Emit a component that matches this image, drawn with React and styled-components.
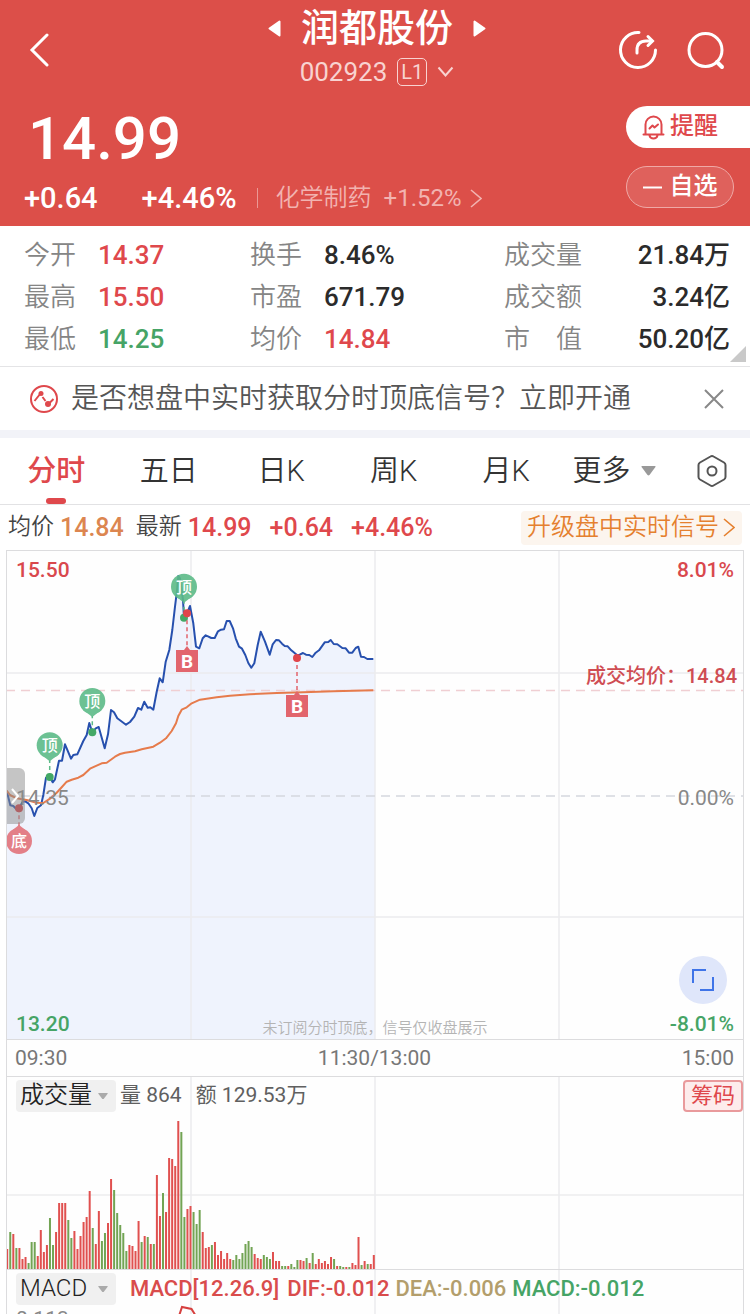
import React, { useState } from "react";
import styled, { createGlobalStyle } from "styled-components";

const GlobalStyle = createGlobalStyle`
  * {
    box-sizing: border-box;
  }
  body {
    margin: 0;
    background: #fff;
    color: #333;
    font-family: Roboto, "Noto Sans CJK SC", sans-serif;
    font-weight: 350;
    line-height: 1.4;
  }
  button {
    padding: 0;
    border: 0;
    background: none;
    color: inherit;
    font: inherit;
    cursor: pointer;
  }
  a {
    color: inherit;
    text-decoration: none;
  }
  svg {
    display: block;
    flex: none;
  }
`;

const RED = "#df484c";
const GREEN = "#46a466";
const ORANGE = "#dc8650";

const Page = styled.div`
  height: 100vh;
  overflow: hidden;
`;

/* ---------- header ---------- */

const Header = styled.header`
  background: #dc4f49;
  color: #fff;
  height: 226px;
`;

const TopBar = styled.div`
  display: grid;
  grid-template-columns: 1fr auto 1fr;
  align-items: center;
  height: 100px;
  padding: 0 24px 0 28px;
`;

const Back = styled.button`
  justify-self: start;
`;

const Stock = styled.div`
  display: flex;
  flex-direction: column;
  align-items: center;
`;

const StockName = styled.div`
  display: flex;
  align-items: center;
  gap: 20px;
  height: 44px;

  h1 {
    margin: 0;
    font-size: 38px;
    line-height: 44px;
    font-weight: 500;
  }
`;

const StockCode = styled.button`
  display: flex;
  align-items: center;
  gap: 10px;
  height: 44px;
  font-size: 26px;
  font-weight: 400;
  color: #f8d3d1;
`;

const Level = styled.span`
  width: 30px;
  height: 28px;
  border: 1px solid #f8d3d1;
  border-radius: 5px;
  font-size: 20px;
  line-height: 26px;
  text-align: center;
`;

const TopIcons = styled.div`
  display: flex;
  justify-content: flex-end;
  gap: 28px;
`;

const Quote = styled.div`
  display: flex;
  justify-content: space-between;
`;

const Price = styled.div`
  padding-left: 28px;
  font-size: 60px;
  line-height: 78px;
  font-weight: 500;
`;

const Changes = styled.div`
  display: flex;
  align-items: center;
  height: 40px;
  padding-left: 24px;
  font-size: 29px;
  font-weight: 500;

  span + span {
    margin-left: 44px;
  }
`;

const Sector = styled.a`
  display: flex;
  align-items: center;
  gap: 8px;
  margin-left: 20px;
  color: #f2b3b0;
  font-size: 24px;
  line-height: 36px;
  font-weight: 350;

  &::before {
    content: "";
    width: 1px;
    height: 20px;
    margin-right: 10px;
    background: #eb9894;
  }

  b {
    margin-left: 4px;
    font-weight: 400;
  }
`;

const Actions = styled.div`
  display: flex;
  flex-direction: column;
  gap: 18px;
  padding-top: 6px;
`;

const Remind = styled.button`
  display: flex;
  align-items: center;
  gap: 5px;
  width: 124px;
  height: 42px;
  padding-left: 16px;
  border-radius: 21px 0 0 21px;
  background: #fff;
  color: ${RED};
  font-size: 24px;
  font-weight: 500;
`;

const Favorite = styled.button`
  display: flex;
  align-items: center;
  justify-content: center;
  gap: 8px;
  width: 108px;
  height: 42px;
  border: 1px solid #efa9a6;
  border-radius: 21px;
  background: #df615c;
  font-size: 24px;
  font-weight: 500;
`;

/* ---------- figures ---------- */

const Stats = styled.section`
  position: relative;
  display: grid;
  grid-template-columns: 226fr 254fr 226fr;
  height: 141px;
  padding: 8px 20px 0 24px;
  border-bottom: 1px solid #e4e4e6;
`;

const StatList = styled.dl`
  display: grid;
  grid-template-columns: auto 1fr;
  grid-auto-rows: 42px;
  column-gap: 22px;
  margin: 0;
  font-size: 26px;
  line-height: 42px;

  dt {
    color: #858585;
    text-align: justify;
    text-align-last: justify;
  }
`;

const StatValue = styled.dd`
  margin: 0;
  color: ${(p) => p.$color || "#2b2b2b"};
  font-weight: 500;
  text-align: ${(p) => (p.$right ? "right" : "left")};
  white-space: nowrap;
`;

const Corner = styled.i`
  position: absolute;
  right: 4px;
  bottom: 4px;
  border: 8px solid #c9c9c9;
  border-top-color: transparent;
  border-left-color: transparent;
`;

const Notice = styled.section`
  display: flex;
  align-items: center;
  height: 71px;
  padding: 0 26px 0 29px;
  border-bottom: 8px solid #f2f3f8;
  color: #555;
  font-size: 28px;

  a {
    flex: 1;
    margin-left: 12px;
  }
`;

/* ---------- tabs ---------- */

const Tabs = styled.nav`
  display: flex;
  align-items: center;
  height: 67px;
  border-bottom: 1px solid #e2e2e4;
`;

const Tab = styled.button`
  position: relative;
  width: 15%;
  height: 66px;
  font-size: 29px;
  font-weight: ${(p) => (p.$active ? 500 : 350)};
  color: ${(p) => (p.$active ? RED : "#333")};

  &::after {
    content: "";
    position: absolute;
    left: 50%;
    bottom: 0;
    width: 20px;
    height: 6px;
    margin-left: -10px;
    border-radius: 3px;
    background: ${(p) => (p.$active ? RED : "transparent")};
  }
`;

const More = styled.button`
  display: flex;
  align-items: center;
  gap: 10px;
  flex: 1;
  padding-left: 10px;
  font-size: 29px;
`;

const Settings = styled.button`
  padding-right: 22px;
`;

const Summary = styled.div`
  display: flex;
  align-items: center;
  height: 45px;
  padding: 0 8px;
  font-size: 23px;
  color: #444;
  white-space: nowrap;
`;

const Num = styled.span`
  margin: 0 12px 0 6px;
  color: ${(p) => p.$color};
  font-size: 25px;
  font-weight: 500;
`;

const Upgrade = styled.a`
  display: flex;
  align-items: center;
  gap: 4px;
  height: 34px;
  margin-left: auto;
  padding: 0 7px 0 6px;
  border-radius: 4px;
  background: #fcf5ee;
  color: #e5802f;
  font-size: 24px;
`;

/* ---------- charts ---------- */

const Charts = styled.main`
  margin: 0 6px;
  border: 1px solid #dcdcde;
  border-bottom: 0;
  background: #fefefe;
  font-weight: 400;
`;

const Panel = styled.section`
  position: relative;
  border-bottom: 1px solid #dcdcde;

  > svg {
    width: 100%;
    height: auto;
  }
`;

const AxisLabel = styled.span`
  position: absolute;
  ${(p) => (p.$right ? "right: 9px;" : "left: 9px;")}
  ${(p) => p.$place}
  color: ${(p) => p.$color};
  font-size: 21px;
  line-height: 26px;
  font-weight: ${(p) => (p.$color === "#888" ? 400 : 500)};
`;

const AverageLabel = styled.span`
  position: absolute;
  right: 6px;
  top: 23%;
  color: #cf4d53;
  font-size: 20px;
  line-height: 26px;
  font-weight: 500;
`;

const Watermark = styled.span`
  position: absolute;
  left: 0;
  right: 0;
  bottom: 0;
  color: #b4b4b4;
  font-size: 15px;
  line-height: 22px;
  font-weight: 350;
  text-align: center;
`;

const Handle = styled.button`
  position: absolute;
  left: 0;
  top: 217px;
  width: 18px;
  height: 56px;
  border-radius: 0 6px 6px 0;
  background: rgba(140, 140, 140, 0.5);
`;

const Expand = styled.button`
  position: absolute;
  right: 16px;
  bottom: 35px;
  display: flex;
  align-items: center;
  justify-content: center;
  width: 48px;
  height: 48px;
  border-radius: 50%;
  background: #dfe6fa;
`;

const TimeAxis = styled.div`
  display: flex;
  justify-content: space-between;
  padding: 0 9px 0 8px;
  border-bottom: 1px solid #dcdcde;
  color: #777;
  font-size: 21px;
  line-height: 36px;
`;

const PanelBar = styled.div`
  position: absolute;
  top: 3px;
  left: 9px;
  right: 0;
  display: flex;
  align-items: center;
  height: 32px;
  color: #606060;
  white-space: nowrap;
`;

const Indicator = styled.button`
  display: flex;
  align-items: center;
  justify-content: space-between;
  min-width: 100px;
  height: 32px;
  padding: 0 8px 0 4px;
  border-radius: 4px;
  background: #f0f0f0;
  color: #222;
  font-size: 24px;
  font-weight: 350;
`;

const Reading = styled.span`
  margin-left: ${(p) => p.$gap}px;
  color: ${(p) => p.$color || "inherit"};
  font-size: ${(p) => (p.$color ? 22 : 21)}px;
  font-weight: ${(p) => (p.$color ? 500 : 400)};
`;

const Chips = styled.button`
  width: 60px;
  height: 32px;
  margin-left: auto;
  border: 2px solid #e99a9c;
  border-radius: 4px;
  background: #fdecec;
  color: ${RED};
  font-size: 22px;
  line-height: 28px;
`;

const MacdPanel = styled(Panel)`
  border-bottom: 0;
`;

const MARKS = [
  { type: "pin", x: 43.7, y: 195.3, dot: 227 },
  { type: "pin", x: 86.3, y: 151, dot: 182.3 },
  { type: "pin", x: 178, y: 36.7, dot: 67.7 },
  { type: "bottom", x: 13, y: 291, dot: 258.3 },
  { type: "buy", x: 181, y: 111, dot: 63.3 },
  { type: "buy", x: 291, y: 156, dot: 108 },
];

const PRICE_LINE =
  "0.7,240.7 4.3,255.3 7.3,256 10,258.7 13,258.3 16.7,251.7 19.3,251.3 22.3,253.3 25.7,258.3 28.3,266 31.3,258 35,255.3 37.3,245 40,227.7 43.7,227 46.7,232.3 49,229.3 53,210.7 56,210.7 59,194.3 65,208.7 67.3,205 71.3,204.3 77.3,191 80.7,185 83.3,173 86.3,182.3 89.7,178.3 92.7,177 98.7,198.3 102,184.3 105,160 108,162.3 111.3,168.3 120,174.7 124,172 128.3,166.7 132,158 135.3,159.7 138.3,151.7 141.7,157.7 144.3,157.3 147.3,159.7 150.7,141.7 153.7,128.3 156.7,132.3 159.7,111.7 163.3,100 166.3,80 169,56.7 170.7,43 172.3,26 174,28.3 177,50 178,67.7 181,63.3 184,56 187.3,73.3 190,96.7 193.3,98.3 196.7,88.3 199.7,85.3 202,86.3 205.3,88 208.7,88 212,81.3 215,79.7 218,79.3 220.7,71 223.7,71 227,78.3 229.7,88.3 233,96.7 236,98.7 239.3,105 242.3,113 245.3,117.7 248.3,113.3 251.7,95 254.7,81.7 259,91.7 263.7,104.7 266.7,94.3 270,90 273,90.3 276,93.7 278.7,96 281.7,96.3 285.3,100.3 291,105 293.7,104.7 297,103 300,104.7 303.3,105 306.3,107 309.7,102.7 313,100.3 318.7,92.3 322.3,92 324.7,90 327.7,94 331.3,94.3 336.3,98 339.7,98.3 343,102.7 346.3,102.7 349.7,98 352.3,96.7 355,106.7 358,107 361.3,109 367.3,109";

const AVERAGE_LINE =
  "0.7,240.7 4,245 10.7,248.3 20.7,250 30.7,252.7 37.3,253 44,248.7 50.7,242.7 55.7,237.3 60.7,231.7 65.7,229.7 72.3,227.7 77.3,225 84,218.7 89,216.3 95.7,213.3 100.7,212.7 109,206.7 114,204 119,202.7 129,201.3 135.7,199.3 147.3,196.7 154,192.7 160,188.3 165.7,181 170,173.3 172.3,166 175.7,159.7 180.7,157.3 185.7,153.3 194,149.7 210.7,147.3 224,145.7 244,144.3 270.7,143 297.3,142.3 327.3,141.3 367.3,140.3";

// negative = falling minute, drawn green
const VOLUMES = [
  20, -37, 35, -21, 21, 10, 12, -6, -27, -27, 13, 39, 17, 24, -51, -24, 37, 66,
  66, 66, -49, -31, 38, 20, 33, 47, 52, 78, -41, 25, 58, -28, -36, 46, 90, -79,
  -56, -44, -36, -18, 24, 23, 18, 48, -27, 33, -32, 25, -25, 94, 53, -76, 57,
  111, 110, 103, 148, -137, -52, 60, 63, -57, -45, -59, 37, 21, 22, -24, 27, 14,
  18, 10, 16, 10, -9, -14, -10, -16, -25, -28, -22, 15, 11, 10, -14, -12, -10,
  17, 8, 8, -3, -3, 3, -5, -2, -9, 9, 8, -11, 6, -16, 5, 10, 6, 8, 5, 12, -10,
  3, -3, -2, 2, -2, 6, 4, 32, -4, 8, -5, 5, 14,
];

const Caret = ({ size = 10, color = "#aaa" }) => (
  <svg width={size} height={size * 0.66} viewBox="0 0 15 10">
    <path d="M1 0h13q1 0 .5 1L8.500 9q-1 1-2 0L.5 1Q0 0 1 0z" fill={color} />
  </svg>
);

const Arrow = ({ left }) => (
  <svg width="13" height="17" viewBox="0 0 13 17">
    <path
      d={left ? "M11.500 1.500v14L1.500 8.500z" : "M1.500 1.500v14l10-7z"}
      fill="#fff"
      stroke="#fff"
      strokeWidth="2"
      strokeLinejoin="round"
    />
  </svg>
);

const Chevron = () => (
  <svg width="12" height="19" viewBox="0 0 12 19">
    <path d="M1 1l10 8.500L1 18" fill="none" stroke="currentColor" strokeWidth="1.600" />
  </svg>
);

const Grid = ({ height }) => (
  <path
    d={`M185 0V${height}M369 0V${height}M553 0V${height}`}
    stroke="#ececee"
    strokeWidth="1.500"
  />
);

const Mark = ({ type, x, y, dot }) => {
  if (type === "buy") {
    return (
      <g>
        <path d={`M${x} ${dot}V${y - 14}`} stroke="#e2646c" strokeWidth="1.500" strokeDasharray="4 3" />
        <path d={`M${x - 11} ${y - 11}h8l3-4 3 4h8v22h-22z`} fill="#e2656d" />
        <text x={x} y={y + 7} textAnchor="middle" fontSize="19" fontWeight="700" fill="#fff">
          B
        </text>
        <circle cx={x} cy={dot} r="4" fill="#e0454b" />
      </g>
    );
  }
  const up = type === "bottom";
  const color = up ? "#e2737b" : "#5dbb88";
  const tip = up ? -1 : 1;
  return (
    <g>
      <path
        d={`M${x} ${dot}V${y + tip * 15}`}
        stroke={color}
        strokeWidth="1.500"
        strokeDasharray="4 3"
      />
      <g opacity="0.9">
        <circle cx={x} cy={y} r="13" fill={color} />
        <path d={`M${x - 9} ${y + tip * 9}L${x} ${y + tip * 16}L${x + 9} ${y + tip * 9}z`} fill={color} />
      </g>
      <text x={x} y={y + 6} textAnchor="middle" fontSize="16" fontWeight="500" fill="#fff">
        {up ? "底" : "顶"}
      </text>
      <circle cx={x} cy={dot} r="4" fill={up ? "#d2383e" : "#43a866"} />
    </g>
  );
};

const PriceChart = () => (
  <svg viewBox="1 1 736 488">
    <polygon points={`0,489 ${PRICE_LINE} 369,109 369,489`} fill="#eff3fd" />
    <Grid height={489} />
    <path d="M0 123H738M0 367H738" stroke="#ececee" strokeWidth="1.500" />
    <path d="M0 246H738" stroke="#d5d8de" strokeWidth="1.500" strokeDasharray="9 6" />
    <path d="M0 140.500H738" stroke="#f0cfd3" strokeWidth="1.500" strokeDasharray="9 6" />
    <polyline points={PRICE_LINE} fill="none" stroke="#2750ae" strokeWidth="2" strokeLinejoin="round" />
    <polyline points={AVERAGE_LINE} fill="none" stroke="#e67b4c" strokeWidth="2" strokeLinejoin="round" />
    {MARKS.map((mark) => (
      <Mark key={`${mark.type}${mark.x}`} {...mark} />
    ))}
  </svg>
);

const VolumeChart = () => (
  <svg viewBox="1 0 736 192">
    <Grid height={192} />
    <path d="M0 118H738" stroke="#ececee" strokeWidth="1.500" />
    {VOLUMES.map((v, i) => (
      <rect
        key={i}
        x={0.2 + i * 3.055}
        y={192 - Math.abs(v)}
        width="2"
        height={Math.abs(v)}
        fill={v > 0 ? "#e0504f" : "#72a454"}
      />
    ))}
  </svg>
);

const TABS = ["分时", "五日", "日K", "周K", "月K"];

const App = () => {
  const [tab, setTab] = useState("分时");
  const [noticeOpen, setNoticeOpen] = useState(true);

  return (
    <Page>
      <GlobalStyle />
      <Header>
        <TopBar>
          <Back aria-label="返回">
            <svg width="22" height="34" viewBox="0 0 22 34">
              <path d="M19 2L4 17l15 15" fill="none" stroke="#fff" strokeWidth="3" strokeLinecap="round" />
            </svg>
          </Back>
          <Stock>
            <StockName>
              <button aria-label="上一只">
                <Arrow left />
              </button>
              <h1>润都股份</h1>
              <button aria-label="下一只">
                <Arrow />
              </button>
            </StockName>
            <StockCode>
              002923
              <Level>L1</Level>
              <svg width="17" height="12" viewBox="0 0 17 12">
                <path d="M1.500 1.500l7 8 7-8" fill="none" stroke="currentColor" strokeWidth="2" />
              </svg>
            </StockCode>
          </Stock>
          <TopIcons>
            <button aria-label="分享">
              <svg width="40" height="40" viewBox="0 0 40 40" fill="none" stroke="#fff" strokeWidth="3" strokeLinecap="round">
                <path d="M21 2.500A17.500 17.500 0 1 0 37.500 20" />
                <path d="M19 23v-3c0-6 3.500-9 9-9h6" />
                <path d="M30 6.500l4.500 4.500-4.500 4.500" />
              </svg>
            </button>
            <button aria-label="搜索">
              <svg width="40" height="40" viewBox="0 0 40 40" fill="none" stroke="#fff" strokeWidth="3" strokeLinecap="round">
                <circle cx="19.500" cy="20" r="16.500" />
                <path d="M31 32l5 5" strokeWidth="4" />
              </svg>
            </button>
          </TopIcons>
        </TopBar>
        <Quote>
          <div>
            <Price>14.99</Price>
            <Changes>
              <span>+0.64</span>
              <span>+4.46%</span>
              <Sector href="#sector">
                化学制药 <b>+1.52%</b>
                <Chevron />
              </Sector>
            </Changes>
          </div>
          <Actions>
            <Remind>
              <svg width="23" height="25" viewBox="0 0 23 25" fill="none" stroke="currentColor" strokeWidth="2" strokeLinecap="round" strokeLinejoin="round">
                <path d="M3.500 18.500V9.500a8 8 0 0 1 16 0v9M1.500 19.500h20M7.500 20.500c1 4 7 4 8 0M7.500 13.500l3-3 2 2 3.500-3" />
              </svg>
              提醒
            </Remind>
            <Favorite>
              <svg width="19" height="3" viewBox="0 0 19 3">
                <path d="M0 1.500h19" stroke="#fff" strokeWidth="2" />
              </svg>
              自选
            </Favorite>
          </Actions>
        </Quote>
      </Header>

      <Stats>
        <StatList>
          <dt>今开</dt>
          <StatValue $color={RED}>14.37</StatValue>
          <dt>最高</dt>
          <StatValue $color={RED}>15.50</StatValue>
          <dt>最低</dt>
          <StatValue $color={GREEN}>14.25</StatValue>
        </StatList>
        <StatList>
          <dt>换手</dt>
          <StatValue>8.46%</StatValue>
          <dt>市盈</dt>
          <StatValue>671.79</StatValue>
          <dt>均价</dt>
          <StatValue $color={RED}>14.84</StatValue>
        </StatList>
        <StatList>
          <dt>成交量</dt>
          <StatValue $right>21.84万</StatValue>
          <dt>成交额</dt>
          <StatValue $right>3.24亿</StatValue>
          <dt>市 值</dt>
          <StatValue $right>50.20亿</StatValue>
        </StatList>
        <Corner />
      </Stats>

      {noticeOpen && (
        <Notice>
          <svg width="30" height="30" viewBox="0 0 30 30" fill="none" stroke={RED} strokeWidth="2">
            <circle cx="15" cy="15" r="13" />
            <path d="M5.500 17l6-7.500M13.500 13l3 4M19.500 20l5-5" />
            <circle cx="12" cy="9.500" r="2.500" fill={RED} stroke="none" />
            <circle cx="19" cy="20" r="3" fill={RED} stroke="none" />
          </svg>
          <a href="#signal">是否想盘中实时获取分时顶底信号？立即开通</a>
          <button aria-label="关闭" onClick={() => setNoticeOpen(false)}>
            <svg width="20" height="20" viewBox="0 0 20 20">
              <path d="M1 1l18 18M19 1L1 19" stroke="#888" strokeWidth="2" />
            </svg>
          </button>
        </Notice>
      )}

      <Tabs>
        {TABS.map((name) => (
          <Tab key={name} $active={name === tab} onClick={() => setTab(name)}>
            {name}
          </Tab>
        ))}
        <More>
          更多
          <Caret size={15} color="#999" />
        </More>
        <Settings aria-label="设置">
          <svg width="32" height="34" viewBox="0 0 32 34" fill="none" stroke="#555" strokeWidth="2" strokeLinejoin="round">
            <path d="M14.500 2.500q1.500-1 3 0l10.500 6q1.500 1 1.500 2.500v12q0 1.500-1.500 2.500l-10.500 6q-1.500 1-3 0L4 25.500Q2.500 24.500 2.500 23V11q0-1.500 1.500-2.500z" />
            <circle cx="16" cy="17" r="4.500" />
          </svg>
        </Settings>
      </Tabs>

      <Summary>
        均价
        <Num $color={ORANGE}>14.84</Num>
        最新
        <Num $color={RED}>14.99</Num>
        <Num $color={RED}>+0.64</Num>
        <Num $color={RED}>+4.46%</Num>
        <Upgrade href="#upgrade">
          升级盘中实时信号
          <Chevron />
        </Upgrade>
      </Summary>

      <Charts>
        <Panel>
          <PriceChart />
          <AxisLabel $color="#d9484d" $place="top: 6px;">15.50</AxisLabel>
          <AxisLabel $right $color="#d9484d" $place="top: 6px;">8.01%</AxisLabel>
          <AxisLabel $color="#888" $place="top: 48%;">14.35</AxisLabel>
          <AxisLabel $right $color="#888" $place="top: 48%;">0.00%</AxisLabel>
          <AxisLabel $color={GREEN} $place="bottom: 2px;">13.20</AxisLabel>
          <AxisLabel $right $color={GREEN} $place="bottom: 2px;">-8.01%</AxisLabel>
          <AverageLabel>成交均价：14.84</AverageLabel>
          <Watermark>未订阅分时顶底，信号仅收盘展示</Watermark>
          <Handle aria-label="展开">
            <svg width="18" height="20" viewBox="0 0 18 20">
              <path d="M5 3l6 7-6 7" fill="none" stroke="#fff" strokeWidth="2" />
            </svg>
          </Handle>
          <Expand aria-label="全屏">
            <svg width="24" height="24" viewBox="0 0 24 24" fill="none" stroke="#3f74e8" strokeWidth="2">
              <path d="M2 15V2h13M22 9v13H9" />
            </svg>
          </Expand>
        </Panel>
        <TimeAxis>
          <span>09:30</span>
          <span>11:30/13:00</span>
          <span>15:00</span>
        </TimeAxis>
        <Panel>
          <VolumeChart />
          <PanelBar>
            <Indicator>
              成交量
              <Caret />
            </Indicator>
            <Reading $gap={4}>量 864</Reading>
            <Reading $gap={14}>额 129.53万</Reading>
            <Chips>筹码</Chips>
          </PanelBar>
        </Panel>
        <MacdPanel>
          <svg viewBox="1 0 736 190">
            <Grid height={190} />
            <path d="M173 46l3-9 9.500 2 5 8" fill="none" stroke="#d6403f" strokeWidth="2" />
          </svg>
          <PanelBar>
            <Indicator>
              MACD
              <Caret />
            </Indicator>
            <Reading $gap={14} $color="#d94c4c">MACD[12.26.9]</Reading>
            <Reading $gap={8} $color="#d94c4c">DIF:-0.012</Reading>
            <Reading $gap={6} $color="#b39e6c">DEA:-0.006</Reading>
            <Reading $gap={6} $color="#46a466">MACD:-0.012</Reading>
          </PanelBar>
          <AxisLabel $color="#888" $place="top: 36px;">0.113</AxisLabel>
        </MacdPanel>
      </Charts>
    </Page>
  );
};

export default App;
